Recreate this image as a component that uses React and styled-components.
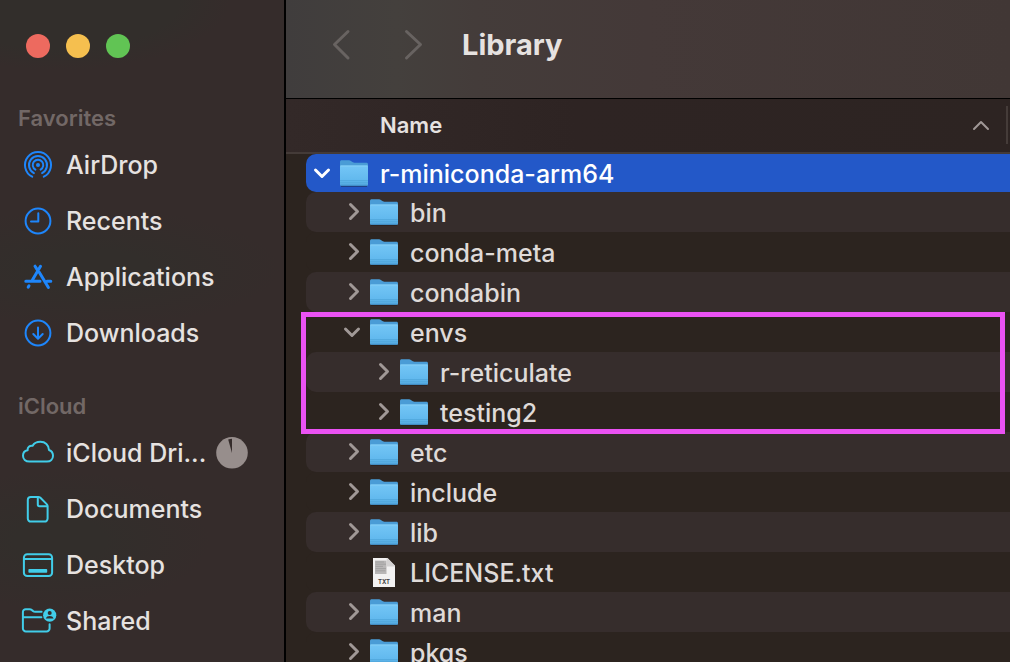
import React from "react";
import styled, { createGlobalStyle } from "styled-components";

const GlobalStyle = createGlobalStyle`
  *, *::before, *::after { box-sizing: border-box; }
  body {
    margin: 0;
    background: #2c241f;
    font-family: Inter, "Liberation Sans", sans-serif;
    color: #e6e2e0;
  }
  button { font: inherit; color: inherit; background: none; border: 0; padding: 0; margin: 0; }
`;

const Window = styled.div`
  display: flex;
  height: 100vh;
  overflow: hidden;
`;

const Sidebar = styled.aside`
  flex: 0 0 286px;
  border-right: 2px solid #000;
  padding-top: 34px;
  overflow: hidden;
  background:
    radial-gradient(ellipse 170px 70px at 60px 0, #322e2b 70%, transparent 100%),
    radial-gradient(ellipse 190px 60px at 90px 268px, #322e2b 30%, transparent 100%),
    radial-gradient(ellipse 150px 70px at 60px 540px, #322e2b 30%, transparent 100%),
    #352c2b;
`;

const WindowControls = styled.div`
  display: flex;
  gap: 16px;
  padding-left: 26px;
`;

const ControlDot = styled.button`
  width: 24px;
  height: 24px;
  border-radius: 50%;
  background: ${(p) => p.$color};
`;

const Section = styled.section`
  margin-top: ${(p) => (p.$first ? 41 : 26)}px;
`;

const SectionTitle = styled.h2`
  margin: 0;
  padding-left: 18px;
  font-size: 22px;
  line-height: 38px;
  font-weight: 600;
  color: #726866;
`;

const Places = styled.ul`
  list-style: none;
  margin: 0;
  padding: 0;
`;

const Place = styled.li`
  display: flex;
  align-items: center;
  height: 56px;
  padding-right: 36px;
`;

const PlaceLink = styled.a`
  display: flex;
  align-items: center;
  gap: 12px;
  flex: 1;
  min-width: 0;
  padding-left: 22px;
  color: inherit;
  text-decoration: none;
  font-size: 25px;
  font-weight: 500;
  line-height: 32px;
`;

const PlaceName = styled.span`
  white-space: nowrap;
`;

const PlaceIcon = styled.svg`
  flex: none;
  width: 32px;
  height: 32px;
  overflow: visible;
  fill: none;
  stroke: ${(p) => p.$color};
  stroke-width: 2;
  stroke-linecap: round;
  stroke-linejoin: round;
  color: ${(p) => p.$color};
`;

const SyncPie = styled.svg`
  flex: none;
  width: 32px;
  height: 32px;
`;

const Content = styled.main`
  flex: 1;
  min-width: 0;
`;

const Toolbar = styled.header`
  display: flex;
  align-items: center;
  height: 99px;
  padding: 0 40px 8px;
  border-bottom: 1px solid #000;
  background: linear-gradient(90deg, #403d3d 0, #44403d 110px, #443c3a 190px, #443938 360px, #413735 100%);
`;

const NavButton = styled.button`
  width: 32px;
  height: 36px;
  margin-right: 40px;
  color: #686361;
`;

const Glyph = styled.svg`
  display: block;
  fill: none;
  stroke: currentColor;
  stroke-width: ${(p) => p.$weight || 3};
  stroke-linecap: round;
  stroke-linejoin: round;
`;

const Title = styled.h1`
  margin: 0;
  padding-left: 32px;
  margin-left: -40px;
  font-size: 29px;
  line-height: 36px;
  font-weight: 700;
`;

const FileTable = styled.table`
  width: 100%;
  border-collapse: collapse;
`;

const HeadCell = styled.th`
  padding: 0;
  text-align: left;
  font-weight: 600;
`;

const HeadBar = styled.div`
  display: flex;
  align-items: center;
  height: 55px;
  padding: 0 2px 2px 94px;
  border-bottom: 2px solid #443b38;
  background: linear-gradient(90deg, #332928, #2e2423 40%, #2d2422);
  font-size: 22px;
  line-height: 28px;
`;

const SortButton = styled.button`
  display: flex;
  align-items: center;
  flex: 1;
  justify-content: space-between;
  padding-right: 16px;
  font-weight: 600;
  svg { color: #a09896; }
`;

const Divider = styled.span`
  width: 2px;
  height: 38px;
  background: #453c39;
`;

const Group = styled.tbody`
  position: relative;
`;

const Outline = styled(Group)`
  &::after {
    content: "";
    position: absolute;
    z-index: 1;
    inset: 0 5px -2px 15px;
    border: 5px solid #ea52f3;
    pointer-events: none;
  }
`;

const Cell = styled.td`
  padding: 0 0 0 20px;
`;

const Row = styled.div`
  display: flex;
  align-items: center;
  height: ${(p) => (p.$selected ? 38 : 40)}px;
  padding-left: ${(p) => p.$level * 30}px;
  border-radius: 10px 0 0 10px;
  background: ${(p) => (p.$selected ? "#2358c8" : p.$striped ? "#362d2c" : "#2c241f")};
  color: ${(p) => (p.$selected ? "#fff" : "#dfdad8")};
`;

const Disclosure = styled.button`
  flex: none;
  width: 34px;
  height: 32px;
  color: ${(p) => (p.$selected ? "#fff" : "#a19997")};
`;

const Spacer = styled.span`
  flex: none;
  width: 34px;
`;

const FileIcon = styled.svg`
  flex: none;
  width: 28px;
  height: 30px;
  margin-right: 12px;
`;

const FileName = styled.span`
  padding-top: 2px;
  font-size: 25px;
  font-weight: 500;
  line-height: 32px;
  white-space: nowrap;
`;

const BLUE = "#1e86fb";
const CYAN = "#41cde9";

const glyphs = {
  airdrop: (
    <>
      <circle cx="16" cy="16" r="2" fill="currentColor" stroke="none" />
      <path d="M13.4 20.6a5.3 5.3 0 1 1 5.2 0M11.9 24.1a9 9 0 1 1 8.2 0M10.2 27.7a13 13 0 1 1 11.6 0" />
    </>
  ),
  recents: (
    <>
      <circle cx="16" cy="16" r="12.4" />
      <path d="M16.3 8.2V16.6H9" />
    </>
  ),
  applications: (
    <g strokeWidth="3">
      <path d="M18.5 5.2L10.4 19M13 5.2L15.2 8.6M3.8 20.3H18M25 20.3H28.8M17.4 11.4L26.4 26.4M7 24.8L6.2 26.1" />
    </g>
  ),
  downloads: (
    <>
      <circle cx="16" cy="16" r="12.4" />
      <path d="M16 10.4V21.4M11.3 17L16 21.7L20.7 17" />
    </>
  ),
  drive: (
    <path d="M7.5 24.6C3.5 24.6 1 22 1 18.8C1 15.8 3 13.6 5.6 13.2C5.4 10.2 7.5 8.4 10.6 8.8C12 6.2 15 4.8 18.4 4.8C23.2 4.8 26.8 8 27 13C29.6 14 31 16.2 31 18.8C31 22.2 28.5 24.6 25 24.6Z" />
  ),
  document: (
    <>
      <path d="M8.8 3.9H16.2c.9 0 1.6.3 2.2.9l6.3 6.3c.6.6.9 1.3.9 2.2V25.6a3 3 0 0 1-3 3H8.8a3 3 0 0 1-3-3V6.9a3 3 0 0 1 3-3Z" />
      <path d="M15.8 4.2V11.6a1.6 1.6 0 0 0 1.6 1.6H25.2" />
    </>
  ),
  desktop: (
    <>
      <rect x="1.9" y="5.3" width="28.2" height="21.8" rx="3.4" />
      <path d="M2 10H30" />
      <rect x="6.4" y="20" width="18.8" height="3.8" rx="0.8" fill="currentColor" stroke="none" />
    </>
  ),
  shared: (
    <>
      <path d="M27.6 19.2V23.4a3 3 0 0 1-3 3H3.9a3 3 0 0 1-3-3V7a2.8 2.8 0 0 1 2.8-2.8H7.6c1 0 1.6.3 2.3.9l1 .8c.7.6 1.3.9 2.3.9H19.6M1 12.2H19.4" />
      <circle cx="27.7" cy="10.2" r="6.6" fill="currentColor" stroke="none" />
      <g fill="#352c2b" stroke="none">
        <circle cx="27.7" cy="8" r="2" />
        <path d="M23.8 13.6C24.3 11.9 25.9 11.1 27.7 11.1S31.1 11.9 31.6 13.6Z" />
      </g>
    </>
  ),
};

const sections = [
  {
    title: "Favorites",
    color: BLUE,
    places: [
      { name: "AirDrop", icon: "airdrop" },
      { name: "Recents", icon: "recents" },
      { name: "Applications", icon: "applications" },
      { name: "Downloads", icon: "downloads" },
    ],
  },
  {
    title: "iCloud",
    color: CYAN,
    places: [
      { name: "iCloud Dri...", icon: "drive", syncing: true },
      { name: "Documents", icon: "document" },
      { name: "Desktop", icon: "desktop" },
      { name: "Shared", icon: "shared" },
    ],
  },
];

const groups = [
  {
    files: [
      { name: "r-miniconda-arm64", level: 0, open: true, selected: true },
      { name: "bin", level: 1, striped: true },
      { name: "conda-meta", level: 1 },
      { name: "condabin", level: 1, striped: true },
    ],
  },
  {
    outlined: true,
    files: [
      { name: "envs", level: 1, open: true },
      { name: "r-reticulate", level: 2, striped: true },
      { name: "testing2", level: 2 },
    ],
  },
  {
    files: [
      { name: "etc", level: 1, striped: true },
      { name: "include", level: 1 },
      { name: "lib", level: 1, striped: true },
      { name: "LICENSE.txt", level: 1, text: true },
      { name: "man", level: 1, striped: true },
      { name: "pkgs", level: 1 },
    ],
  },
];

function Folder() {
  return (
    <FileIcon viewBox="0 0 28 30" aria-hidden="true">
      <path d="M1 27.2H27V28.6H1Z" fill="#1c1613" opacity=".6" />
      <path d="M0 3.9C0 2.8.7 2.2 1.6 2.2H9.2C11.2 2.2 12 4.7 14.4 4.7H26.4C27.4 4.7 28 5.3 28 6.3V12H0Z" fill="#4a9cd6" />
      <path d="M0 8.8C0 8 .5 7.6 1.3 7.6H26.7C27.5 7.6 28 8 28 8.8V26.2C28 27.2 27.4 27.8 26.4 27.8H1.6C.6 27.8 0 27.2 0 26.2Z" fill="url(#folderFront)" />
      <path d="M.5 8H27.5" stroke="#8dd3f7" strokeWidth=".8" />
      <path d="M0 22.7H28M0 24.8H28" stroke="#4fa5da" strokeWidth=".9" />
      <path d="M.4 27.2H27.6" stroke="#3f8ec9" strokeWidth="1" />
    </FileIcon>
  );
}

function TextFile() {
  return (
    <FileIcon viewBox="0 0 28 30" aria-hidden="true">
      <path d="M3 1H17.5L25 9V30H3Z" fill="#f3f2f2" />
      <path d="M5 3.6H16.5V17H5Z" fill="#b9b7b7" />
      <path d="M5.5 5H14M5.5 7.2H16M5.5 9.4H13M5.5 11.6H16M5.5 13.8H15.5" stroke="#9a9898" strokeWidth=".7" />
      <path d="M16.6 1H17.5L25 8.6V9.6H17.6C17 9.6 16.6 9.2 16.6 8.6Z" fill="#d4d2d2" />
      <text x="14" y="26.8" textAnchor="middle" fontSize="6" fontWeight="700" fill="#444">TXT</text>
    </FileIcon>
  );
}

function FileRow({ file }) {
  const { name, level, open, selected, striped, text } = file;
  return (
    <tr>
      <Cell>
        <Row $level={level} $selected={selected} $striped={striped}>
          {text ? (
            <Spacer />
          ) : (
            <Disclosure $selected={selected} aria-expanded={!!open} aria-label={name}>
              <Glyph width="34" height="32" viewBox="0 0 34 32">
                <path d={open ? "M9.5 13L16 19.5L22.5 13" : "M14.5 8.5L21.5 15.5L14.5 22.5"} />
              </Glyph>
            </Disclosure>
          )}
          {text ? <TextFile /> : <Folder />}
          <FileName>{name}</FileName>
        </Row>
      </Cell>
    </tr>
  );
}

export default function App() {
  return (
    <Window>
      <GlobalStyle />
      <svg width="0" height="0" style={{ position: "absolute" }} aria-hidden="true">
        <defs>
          <linearGradient id="folderFront" x1="0" y1="0" x2="0" y2="1">
            <stop offset="0" stopColor="#74c6f6" />
            <stop offset=".7" stopColor="#62b9ee" />
            <stop offset="1" stopColor="#58aee4" />
          </linearGradient>
        </defs>
      </svg>
      <Sidebar>
        <WindowControls>
          <ControlDot $color="#ed6a5f" aria-label="Close" />
          <ControlDot $color="#f5bf4f" aria-label="Minimize" />
          <ControlDot $color="#61c454" aria-label="Zoom" />
        </WindowControls>
        {sections.map((section, i) => (
          <Section key={section.title} $first={i === 0}>
            <SectionTitle>{section.title}</SectionTitle>
            <Places>
              {section.places.map((place) => (
                <Place key={place.name}>
                  <PlaceLink href="#">
                    <PlaceIcon viewBox="0 0 32 32" $color={section.color} aria-hidden="true">
                      {glyphs[place.icon]}
                    </PlaceIcon>
                    <PlaceName>{place.name}</PlaceName>
                  </PlaceLink>
                  {place.syncing && (
                    <SyncPie viewBox="0 0 32 32" aria-hidden="true">
                      <circle cx="16" cy="15.8" r="15.8" fill="#978e8c" />
                      <path d="M16 16V1.8A14 14 0 0 0 12.2 2.4Z" fill="#352c2b" />
                    </SyncPie>
                  )}
                </Place>
              ))}
            </Places>
          </Section>
        ))}
      </Sidebar>
      <Content>
        <Toolbar>
          <NavButton aria-label="Back">
            <Glyph width="32" height="36" viewBox="0 0 32 36">
              <path d="M22 4.5L8.5 17.5L22 31" />
            </Glyph>
          </NavButton>
          <NavButton aria-label="Forward">
            <Glyph width="32" height="36" viewBox="0 0 32 36">
              <path d="M8.5 4.5L22.5 17.5L8.5 31" />
            </Glyph>
          </NavButton>
          <Title>Library</Title>
        </Toolbar>
        <FileTable>
          <thead>
            <tr>
              <HeadCell scope="col" aria-sort="ascending">
                <HeadBar>
                  <SortButton>
                    Name
                    <Glyph width="18" height="14" viewBox="0 0 18 14" $weight={2}>
                      <path d="M2 11L9 4L16 11" />
                    </Glyph>
                  </SortButton>
                  <Divider />
                </HeadBar>
              </HeadCell>
            </tr>
          </thead>
          {groups.map((group, i) => {
            const Body = group.outlined ? Outline : Group;
            return (
              <Body key={i}>
                {group.files.map((file) => (
                  <FileRow key={file.name} file={file} />
                ))}
              </Body>
            );
          })}
        </FileTable>
      </Content>
    </Window>
  );
}
